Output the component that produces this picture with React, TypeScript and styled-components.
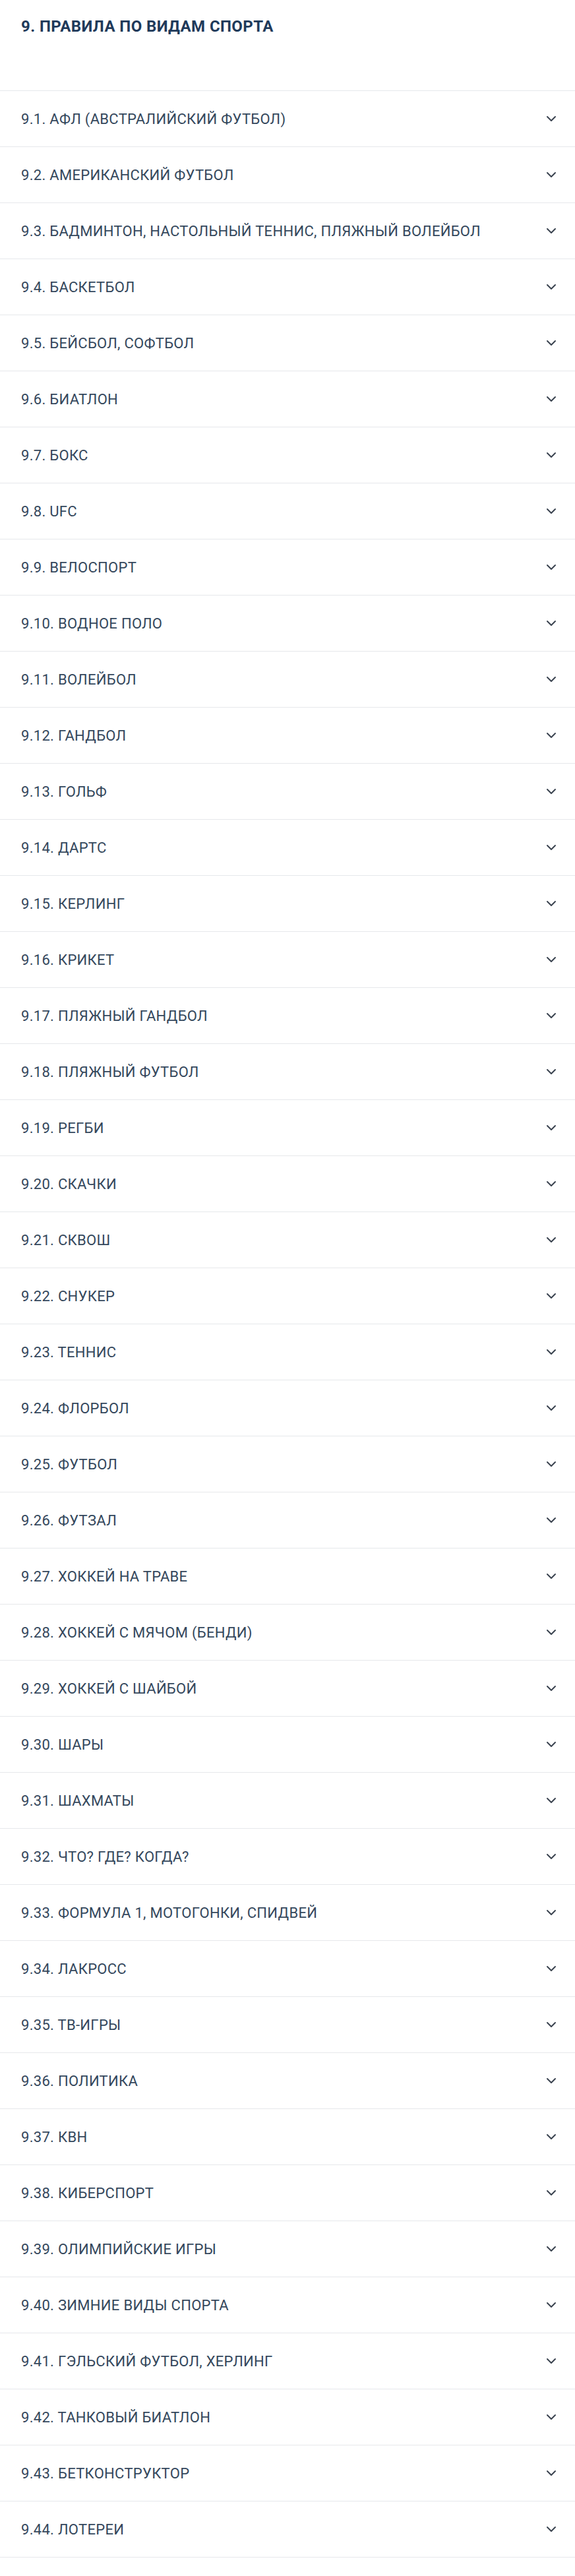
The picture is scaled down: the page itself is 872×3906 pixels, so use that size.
import React from 'react';
import styled, { createGlobalStyle } from 'styled-components';
import { ChevronDown } from 'lucide-react';

const GlobalStyle = createGlobalStyle`
  body {
    margin: 0;
    background: #fff;
    font-family: Roboto, "Noto Sans", sans-serif;
  }
`;

const Page = styled.div`
  width: 100%;
  padding-bottom: 28px;
`;

const Title = styled.h2`
  margin: 0;
  padding: 24px 32px 81px;
  font-size: 24px;
  line-height: 32px;
  font-weight: 700;
  letter-spacing: 0.4px;
  color: #1f3a5a;
`;

const List = styled.ul`
  margin: 0;
  padding: 0;
  list-style: none;
  border-top: 1px solid #e6e8eb;
`;

const Row = styled.li`
  display: flex;
  align-items: center;
  justify-content: space-between;
  height: 84px;
  padding: 0 24px 0 32px;
  border-bottom: 1px solid #e6e8eb;
  cursor: pointer;
`;

const Label = styled.span`
  font-size: 22px;
  font-weight: 400;
  letter-spacing: 0.3px;
  color: #34475c;
`;

const Arrow = styled(ChevronDown)`
  color: #3b4450;
  flex-shrink: 0;
`;

const items = [
  'АФЛ (АВСТРАЛИЙСКИЙ ФУТБОЛ)',
  'АМЕРИКАНСКИЙ ФУТБОЛ',
  'БАДМИНТОН, НАСТОЛЬНЫЙ ТЕННИС, ПЛЯЖНЫЙ ВОЛЕЙБОЛ',
  'БАСКЕТБОЛ',
  'БЕЙСБОЛ, СОФТБОЛ',
  'БИАТЛОН',
  'БОКС',
  'UFC',
  'ВЕЛОСПОРТ',
  'ВОДНОЕ ПОЛО',
  'ВОЛЕЙБОЛ',
  'ГАНДБОЛ',
  'ГОЛЬФ',
  'ДАРТС',
  'КЕРЛИНГ',
  'КРИКЕТ',
  'ПЛЯЖНЫЙ ГАНДБОЛ',
  'ПЛЯЖНЫЙ ФУТБОЛ',
  'РЕГБИ',
  'СКАЧКИ',
  'СКВОШ',
  'СНУКЕР',
  'ТЕННИС',
  'ФЛОРБОЛ',
  'ФУТБОЛ',
  'ФУТЗАЛ',
  'ХОККЕЙ НА ТРАВЕ',
  'ХОККЕЙ С МЯЧОМ (БЕНДИ)',
  'ХОККЕЙ С ШАЙБОЙ',
  'ШАРЫ',
  'ШАХМАТЫ',
  'ЧТО? ГДЕ? КОГДА?',
  'ФОРМУЛА 1, МОТОГОНКИ, СПИДВЕЙ',
  'ЛАКРОСС',
  'ТВ-ИГРЫ',
  'ПОЛИТИКА',
  'КВН',
  'КИБЕРСПОРТ',
  'ОЛИМПИЙСКИЕ ИГРЫ',
  'ЗИМНИЕ ВИДЫ СПОРТА',
  'ГЭЛЬСКИЙ ФУТБОЛ, ХЕРЛИНГ',
  'ТАНКОВЫЙ БИАТЛОН',
  'БЕТКОНСТРУКТОР',
  'ЛОТЕРЕИ',
];

const App = () => (
  <Page>
    <GlobalStyle />
    <Title>9. ПРАВИЛА ПО ВИДАМ СПОРТА</Title>
    <List>
      {items.map((name, i) => (
        <Row key={name}>
          <Label>
            9.{i + 1}. {name}
          </Label>
          <Arrow size={24} strokeWidth={2} />
        </Row>
      ))}
    </List>
  </Page>
);

export default App;
